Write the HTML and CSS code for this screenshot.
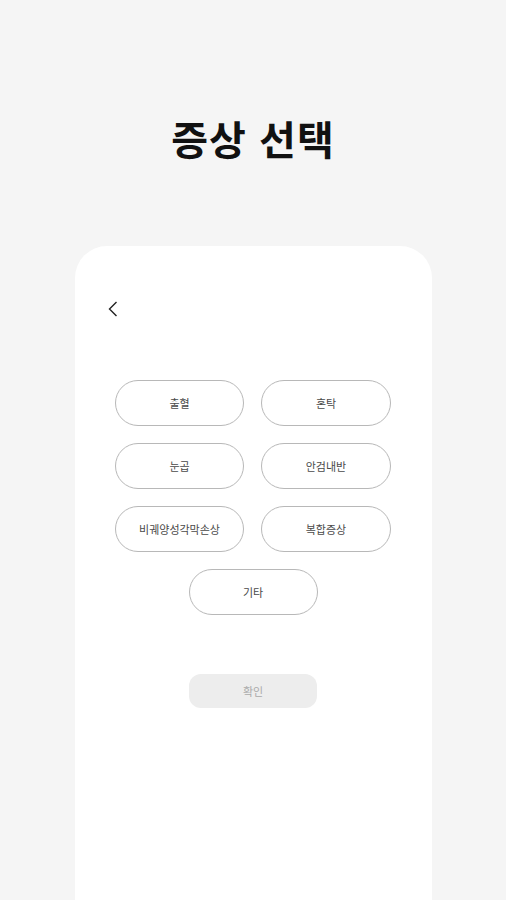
FILE: index.html
```html
<!DOCTYPE html>
<html lang="ko">
<head>
  <meta charset="UTF-8">
  <title>증상 선택</title>
  <link rel="stylesheet" href="styles.css">
</head>
<body>
  <h1 class="page-title">증상 선택</h1>

  <div class="card">
    <button class="back-btn" aria-label="뒤로">
      <svg width="10" height="16" viewBox="0 0 10 16">
        <path d="M8.5 1 L1.5 8 L8.5 15" fill="none" stroke="#222" stroke-width="1.4" />
      </svg>
    </button>

    <div class="symptoms">
      <button class="symptom">출혈</button>
      <button class="symptom">혼탁</button>
      <button class="symptom">눈곱</button>
      <button class="symptom">안검내반</button>
      <button class="symptom">비궤양성각막손상</button>
      <button class="symptom">복합증상</button>
      <button class="symptom wide">기타</button>
    </div>

    <button class="confirm" disabled>확인</button>
  </div>
</body>
</html>
```

FILE: styles.css
```css
body {
  font-family: "Noto Sans CJK KR", "Noto Sans", sans-serif;
  background-color: #f5f5f5;
  margin: 0;
  height: 900px;
  overflow: hidden;
  display: flex;
  flex-direction: column;
  align-items: center;
}

.page-title {
  margin: 111px 0 0;
  font-size: 40px;
  line-height: 54px;
  font-weight: 700;
  color: #111;
  letter-spacing: 1px;
}

.card {
  margin-top: 81px;
  width: 357px;
  flex-grow: 1;
  background-color: #fff;
  border-radius: 32px 32px 0 0;
  display: flex;
  flex-direction: column;
  align-items: center;
}

.back-btn {
  align-self: flex-start;
  margin: 55px 0 0 33px;
  padding: 0;
  width: 10px;
  height: 16px;
  background: none;
  border: none;
  cursor: pointer;
}

.back-btn svg {
  display: block;
}

.symptoms {
  margin-top: 63px;
  display: grid;
  grid-template-columns: 129px 130px;
  column-gap: 17px;
  row-gap: 17px;
}

.symptom {
  height: 46px;
  background-color: #fff;
  border: 1px solid #b8b8b8;
  border-radius: 23px;
  font-family: inherit;
  font-size: 11px;
  color: #4a4a4a;
  cursor: pointer;
  padding: 0;
}

.symptom.wide {
  grid-column: 1 / span 2;
  justify-self: center;
  width: 129px;
}

.confirm {
  margin-top: 59px;
  width: 128px;
  height: 34px;
  background-color: #ededed;
  border: none;
  border-radius: 12px;
  font-family: inherit;
  font-size: 11px;
  color: #aaa;
}
```
